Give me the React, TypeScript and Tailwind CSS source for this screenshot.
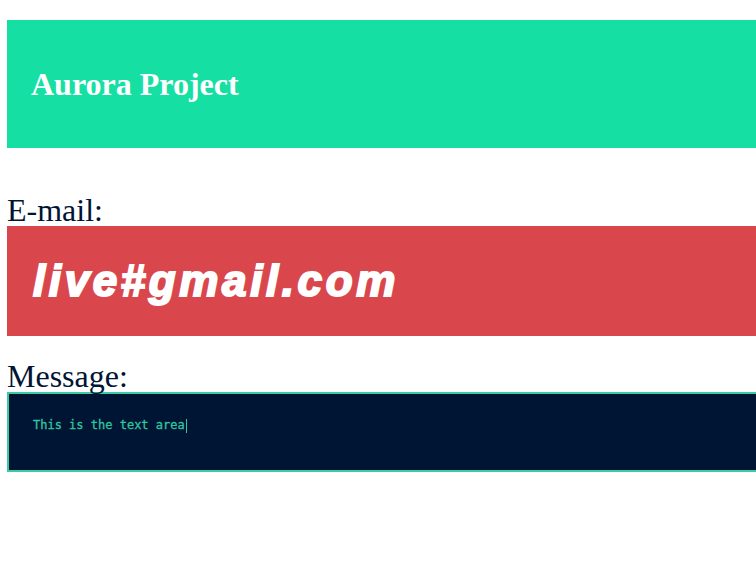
import React from "react";

const App = () => {
  return (
    <div className="h-[587px] w-full overflow-hidden bg-white pl-[7px] pt-[20px] font-['Liberation_Serif',serif]">
      <div className="flex h-[128px] w-[800px] items-center bg-[#16dfa4] pl-[24px]">
        <h1 className="text-[32px] font-bold leading-none text-white">Aurora Project</h1>
      </div>

      <div className="mt-[46px] text-[32px] leading-[32px] text-[#001433]">E-mail:</div>
      <div className="flex h-[110px] w-[800px] items-center bg-[#d9474d] pl-[26px]">
        <span className="font-['Liberation_Sans',Arial,sans-serif] text-[44px] font-bold italic leading-none tracking-[3.6px] text-white [-webkit-text-stroke:2px_white]">
          live#gmail.com
        </span>
      </div>

      <div className="mt-[24px] text-[32px] leading-[32px] text-[#001433]">Message:</div>
      <div className="h-[80px] w-[800px] border-2 border-[#3ccaa4] bg-[#001433] px-[24px] pt-[24px]">
        <p className="flex items-center font-['DejaVu_Sans_Mono',monospace] text-[12px] leading-[15px] text-[#2fc6a0] [-webkit-text-stroke:0.3px_#2fc6a0]">
          This is the text area
          <span className="ml-[1px] inline-block h-[14px] w-[1px] bg-[#2fc6a0]" />
        </p>
      </div>
    </div>
  );
};

export default App;
